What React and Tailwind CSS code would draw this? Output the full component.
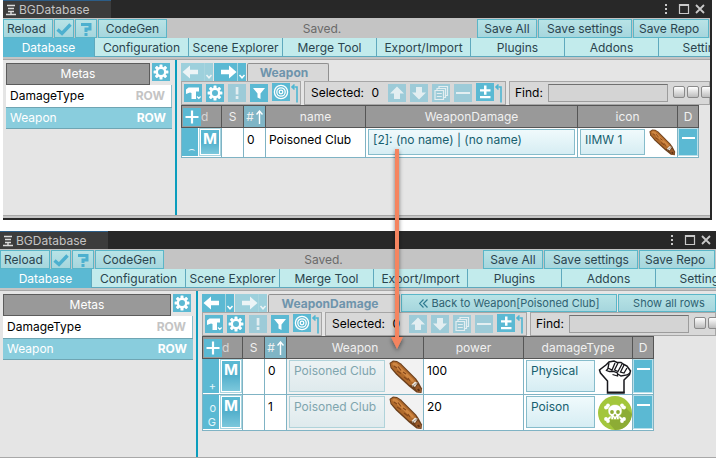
import React from 'react';

const FONT = "font-['Inter','Liberation_Sans',sans-serif]";
const ICON_BOX = 'flex h-[18px] w-[18px] shrink-0 items-center justify-center bg-[#5bb9d3] text-white';
const ICON_BOX_OFF = 'flex h-[18px] w-[18px] shrink-0 items-center justify-center bg-[#9dcbd8] text-[#e3eef1]';
const SOFT_BTN = 'flex h-[19px] shrink-0 items-center whitespace-nowrap border border-[#5ab6c8] bg-gradient-to-b from-[#b8e3e6] to-[#a6d6dd] pt-px text-[#2a444e]';

function Gear() {
  return (
    <svg viewBox="0 0 18 18" className="h-[18px] w-[18px]">
      <circle cx="9" cy="9" r="4.2" fill="none" stroke="currentColor" strokeWidth="2.4" />
      {[0, 45, 90, 135, 180, 225, 270, 315].map((a) => (
        <rect key={a} x="7.5" y="1.6" width="3" height="2.8" rx="0.5" fill="currentColor" transform={`rotate(${a} 9 9)`} />
      ))}
    </svg>
  );
}

const ICONS = {
  hammer: (
    <>
      <path d="M2 5.500 4.500 3.500H15v4h-3V15H7.500V9L6 8.500 2 10z" fill="currentColor" />
      <path d="m13 12.500 1.800 1.800 1.800-1.800" fill="none" stroke="currentColor" strokeWidth="1.200" />
    </>
  ),
  bang: <path d="M7.700 3h2.700v7.500H7.700zM7.700 12h2.700v3H7.700z" fill="currentColor" />,
  filter: <path d="M3 4h12l-4.500 5.500V15l-3-1.500v-4z" fill="currentColor" />,
  target: (
    <g fill="none" stroke="currentColor" strokeWidth="1.3">
      <circle cx="9" cy="9" r="6.600" />
      <circle cx="9" cy="9" r="4.200" />
      <circle cx="9" cy="9" r="1.800" />
    </g>
  ),
  up: <path d="M9 2.500 16 9.500h-4V15H6V9.500H2z" fill="currentColor" />,
  down: <path d="M9 15.500 2 8.500h4V3h6v5.500h4z" fill="currentColor" />,
  copy: (
    <g fill="none" stroke="currentColor" strokeWidth="1.200">
      <path d="M3 6.500h8.500v9H3zM5 6.500v-2h8.500v9h-2M7 4.500v-2h8.500v9h-2M4.800 9.500h5M4.800 12.500h5" />
    </g>
  ),
  minus: <path d="M2 8h14v2H2z" fill="currentColor" />,
  plusMinus: <path d="M8 2.500h2.500v3.700h4v2.300h-4v3.300H8V8.500H4V6.200h4zM4 13h10.500v2.300H4z" fill="currentColor" />,
};

function ToolButton({ name, label, off }) {
  return (
    <button type="button" aria-label={label} disabled={off} className={off ? ICON_BOX_OFF : ICON_BOX}>
      {name === 'gear' ? <Gear /> : <svg viewBox="0 0 18 18" className="h-[18px] w-[18px]">{ICONS[name]}</svg>}
    </button>
  );
}

function Corner() {
  return (
    <svg viewBox="0 0 9 20" className="h-5 w-[9px] shrink-0 self-start">
      <path d="M2 4h5v15.500M4.500 1.500 2 4l2.500 2.500" fill="none" stroke="#4fb6d2" strokeWidth="1.600" />
    </svg>
  );
}

function NavArrow({ dir, off }) {
  return (
    <button
      type="button"
      aria-label={dir === 'left' ? 'Back' : 'Forward'}
      disabled={off}
      className={`flex h-[18px] w-8 shrink-0 items-center ${off ? 'bg-[#9dd0dc] text-[#ecf4f6]' : 'bg-[#5bb9d3] text-white'}`}
    >
      <svg viewBox="0 0 32 18" className="h-[18px] w-8">
        <g fill="currentColor" transform={dir === 'left' ? undefined : 'translate(24 0) scale(-1 1)'}>
          <path d="M1.500 9 9 2.500v4.200h8v4.600H9v4.200z" />
        </g>
        <path d="M23.500 0v18" stroke="#a9d5df" strokeWidth="1" />
        <path d="m25.500 12 2.500 2.800 2.500-2.800" fill="none" stroke="currentColor" strokeWidth="1.500" />
      </svg>
    </button>
  );
}

function Club({ className }) {
  return (
    <svg viewBox="0 0 34 34" className={className}>
      <path d="M.5 3 4 .5 8 1l4 2.500L27 18.500l2.500 3.500L33 28.500 32.500 33l-5-.5L20 26.500 7 14.500 1.500 8z" fill="#6b3f1c" />
      <path d="M1.500 3.500 4.500 1.500 8 2l3.500 2.500L26 19l2 3.500-4 3-3.500-.5L8 13.500 2.500 7.500z" fill="#b06a2c" />
      <path d="M3 4 5 2.500 8 3.500 24 19l1.500 2.500L23 22 9 9.500z" fill="#cf8743" />
      <path d="m5 6 3 2M9 6.500l3 4M8 11l4 2.500M14 12l3 2M15 17l4 3M19 18l2 3" stroke="#85481c" strokeWidth="1.200" />
      <path d="m22.500 25 3.500-3.500 2.500 1.500-2.500 4z" fill="#ece4da" />
      <path d="m23 26.500 5.500-4" stroke="#9a938c" strokeWidth="1" />
      <path d="m26 28 3-3.500 3 4.500v3l-3 .5z" fill="#9a5a2a" />
      <path d="m28 29.500 2-1 1 2-1.500 1z" fill="#5b3013" />
    </svg>
  );
}

function Fist() {
  return (
    <svg viewBox="0 0 34 34" className="h-[34px] w-[34px] shrink-0">
      <path
        d="M9.500 33V21L2.500 13 1.500 10l7-5.500L11 2l5-1 3 1.500h4l3 2 3 1.500 3.500 5-1 3.500L26 20v13z"
        fill="#fff"
        stroke="#17171c"
        strokeWidth="1.500"
      />
      <path
        d="m11 3-1 5 4 2 3-7M20 3l-3.500 7 3.500 1.500L24 4M26 5l-3.500 7 3.500 1 3-5M10 8.500l-1.500 2 3 1h4l4 1.500v3l-5-1.500M19 13.500l4 2.500 6-1 3-2"
        fill="none"
        stroke="#17171c"
        strokeWidth="1.300"
      />
      <path d="M9 31.500h17.500V33H9z" fill="#17171c" />
    </svg>
  );
}

function Skull() {
  return (
    <svg viewBox="0 0 34 34" className="h-[34px] w-[34px] shrink-0">
      <circle cx="17" cy="17" r="17" fill="#a3c63c" />
      <path d="m9 25 8 9c7 0 13-3 16-11l1-5-9-9-5 4z" fill="#8dac35" />
      <path d="m9 11 16 13M25 11 9 24" stroke="#fff" strokeWidth="2.200" />
      <g fill="#fff">
        <circle cx="8" cy="11.500" r="1.900" />
        <circle cx="10" cy="9.500" r="1.900" />
        <circle cx="26" cy="11.500" r="1.900" />
        <circle cx="24" cy="9.500" r="1.900" />
        <circle cx="8" cy="23" r="1.900" />
        <circle cx="10" cy="25" r="1.900" />
        <circle cx="26" cy="23" r="1.900" />
        <circle cx="24" cy="25" r="1.900" />
      </g>
      <path d="M17 8.500c-4.500 0-7 3-7 6.500 0 3 1.500 4 3 5v3.500h8V20c1.500-1 3-2 3-5 0-3.500-2.500-6.500-7-6.500z" fill="#fff" stroke="#a3c63c" strokeWidth="0.600" />
      <circle cx="14" cy="16" r="1.900" fill="#8dac35" />
      <circle cx="20" cy="16" r="1.900" fill="#8dac35" />
      <path d="m17 18-1 2h2zM15.500 21.500v2M18.500 21.500v2" fill="#8dac35" stroke="#8dac35" strokeWidth="0.700" />
    </svg>
  );
}

function TitleBar() {
  return (
    <header className="flex h-[18px] shrink-0 justify-between bg-[#282828] text-[#c4c4c4]">
      <div className="flex w-[108px] items-center gap-[3px] border-t border-[#2c5d87] bg-[#3c3c3c] pl-[2px] pt-px">
        <svg viewBox="0 0 11 12" className="h-3 w-[11px] shrink-0">
          <path d="M2 1.500h8M3 4.500h6M3 7.500h6M1 10.500h10M6 7v4" stroke="#dcdcdc" strokeWidth="1.400" />
        </svg>
        <span>BGDatabase</span>
      </div>
      <div className="flex items-center pr-[5px]">
        <svg viewBox="0 0 42 12" className="h-3 w-[42px]">
          <path d="M2 1h2v2H2zM2 5h2v2H2zM2 9h2v2H2z" fill="#c9c9c9" />
          <path d="M16.500 1.500h9v9h-9zM16 2.500h10" fill="none" stroke="#c9c9c9" strokeWidth="1.200" />
          <path d="m33 2 8 8M41 2l-8 8" stroke="#c9c9c9" strokeWidth="1.800" />
        </svg>
      </div>
    </header>
  );
}

const TABS = ['Configuration', 'Scene Explorer', 'Merge Tool', 'Export/Import', 'Plugins', 'Addons', 'Settings'];

function MainBars() {
  return (
    <div className="shrink-0 border-b border-[#a8a8a8] bg-[#c4c4c4] pb-[2px] pt-px">
      <div className="flex justify-between">
        <div className="flex gap-px">
          <button type="button" className={`${SOFT_BTN} w-[50px] pl-[3px]`}>Reload</button>
          <button type="button" aria-label="Check" className={`${SOFT_BTN} w-5 justify-center`}>
            <svg viewBox="0 0 16 14" className="h-[14px] w-4 shrink-0">
              <path d="m1.500 7.500 4.500 4 8.500-9" fill="none" stroke="#4db0cf" strokeWidth="3.400" />
            </svg>
          </button>
          <button type="button" aria-label="Help" className={`${SOFT_BTN} w-[22px] justify-center`}>
            <svg viewBox="0 0 14 16" className="h-4 w-[14px]">
              <path d="M2 3.500h9v4.500H7v3M5.500 13.500h3" fill="none" stroke="#4db0cf" strokeWidth="3" />
            </svg>
          </button>
          <button type="button" className={`${SOFT_BTN} w-[69px] justify-center`}>CodeGen</button>
        </div>
        <output className="flex items-center text-[#6a6a6a]">Saved.</output>
        <div className="flex gap-px pr-px">
          <button type="button" className={`${SOFT_BTN} w-[60px] justify-center`}>Save All</button>
          <button type="button" className={`${SOFT_BTN} w-[94px] justify-center`}>Save settings</button>
          <button type="button" className={`${SOFT_BTN} w-[76px] pl-[5px]`}>Save Repo</button>
        </div>
      </div>
      <nav className="flex overflow-hidden">
        <button type="button" className="h-[19px] w-[91px] shrink-0 bg-[#5bb9d3] pt-px text-white">Database</button>
        {TABS.map((t) => (
          <button key={t} type="button" className="h-[19px] w-[94px] shrink-0 whitespace-nowrap border-b border-l border-[#5fa9bd] bg-[#c2ebec] pt-px text-[#2a444e]">
            {t}
          </button>
        ))}
      </nav>
    </div>
  );
}

function Metas({ width }) {
  return (
    <aside className={`shrink-0 px-[3px] pt-[3px] ${width}`}>
      <div className="flex gap-[2px] pr-[2px]">
        <h2 className="flex h-[22px] flex-1 items-center justify-center border border-[#5c5c5c] bg-[#999] font-normal text-white">Metas</h2>
        <button type="button" aria-label="Metas settings" className={ICON_BOX}><Gear /></button>
      </div>
      <button type="button" className="flex h-[22px] w-full items-center justify-between border-r border-[#8fc0cc] bg-white pl-1 pr-[6px] text-black">
        <span>DamageType</span>
        <span className="font-bold text-[#c4c4c4]">ROW</span>
      </button>
      <button type="button" className="flex h-[22px] w-full items-center justify-between border-y border-[#6fa5b3] bg-[#89cddd] pl-1 pr-[6px] text-white">
        <span>Weapon</span>
        <span className="font-bold">ROW</span>
      </button>
    </aside>
  );
}

const BAR = 'flex h-6 shrink-0 items-center border border-[#a6a6a6] bg-[#d8d8d8]';

function GridToolbar({ id }) {
  return (
    <div className="flex gap-[3px] overflow-hidden">
      <div className={`${BAR} w-[120px] gap-1 pl-[2px]`}>
        <ToolButton name="hammer" label="Tools" />
        <ToolButton name="gear" label="Settings" />
        <ToolButton name="bang" label="Errors" off />
        <ToolButton name="filter" label="Filter" />
        <div className="flex"><ToolButton name="target" label="Target" /><Corner /></div>
      </div>
      <div className={`${BAR} w-[202px] gap-1 pl-[6px]`}>
        <span className="flex w-[73px] justify-between pr-[5px] text-black"><span>Selected:</span><span>0</span></span>
        <ToolButton name="up" label="Move up" off />
        <ToolButton name="down" label="Move down" off />
        <ToolButton name="copy" label="Copy" off />
        <ToolButton name="minus" label="Remove" off />
        <div className="flex"><ToolButton name="plusMinus" label="Invert selection" /><Corner /></div>
      </div>
      <div className={`${BAR} min-w-0 flex-1 shrink pl-[5px] text-black`}>
        <label htmlFor={id} className="w-[33px] shrink-0">Find:</label>
        <input id={id} type="text" className="h-[18px] w-[120px] shrink-0 border border-[#9c9c9c] border-t-[#707070] bg-[#d4d4d4]" />
        <div className="ml-[5px] flex gap-[2px] pb-[2px]">
          {['Aa', 'W', 'R', 'C'].map((l) => (
            <button key={l} type="button" aria-label={`Search option ${l}`} className="h-3 w-3 shrink-0 rounded-[2px] border border-[#8a8a8a] bg-gradient-to-b from-white to-[#bdbdbd]" />
          ))}
        </div>
      </div>
    </div>
  );
}

const TH_BASE = 'h-[22px] border border-[#555] p-0 font-normal text-[#f0f0f0]';
const TH = `${TH_BASE} bg-[#999]`;
const TD_BASE = 'border border-[#7fb3c4] p-0 align-top';
const TD = `${TD_BASE} bg-white`;

function HeadStart() {
  return (
    <>
      <th className={TH}>
        <div className="flex items-center pl-px">
          <button type="button" aria-label="Add row" className={ICON_BOX}>
            <svg viewBox="0 0 18 18" className="h-[18px] w-[18px]"><path d="M9 2.500v13M2.500 9h13" stroke="currentColor" strokeWidth="2.200" /></svg>
          </button>
          <span className="text-[#d6d6d6]">d</span>
        </div>
      </th>
      <th className={TH}>S</th>
      <th className={`${TH_BASE} bg-[#7fb5c6]`}>
        <span className="flex items-center justify-center gap-[2px]">
          #
          <svg viewBox="0 0 7 14" className="h-[14px] w-[7px]"><path d="M3.500 14V2M.5 4.500l3-3.500 3 3.500" fill="none" stroke="#fff" strokeWidth="1.400" /></svg>
        </span>
      </th>
    </>
  );
}

function RowStart({ n, mark, tall }) {
  const h = tall ? 'h-[34px]' : 'h-7';
  return (
    <>
      <td className={TD}>
        <div className={`flex gap-px ${h}`}>
          <span className="flex w-4 shrink-0 items-end justify-end whitespace-pre-line bg-[#5bb9d3] pr-[3px] text-right text-[11px] leading-[14px] text-[#e4f5fa]">{mark}</span>
          <button type="button" className="flex-1 border-2 border-white bg-gradient-to-b from-[#5bb9d3] via-[#53b0cc] to-[#7cc8dc] outline outline-1 -outline-offset-1 outline-[#a8d5e0]">
            <span className="flex h-full items-start justify-center text-[15px] font-bold leading-[18px] text-white">M</span>
          </button>
        </div>
      </td>
      <td className={TD} />
      <td className={`${TD} pl-[3px] pt-[3px] text-black`}>{n}</td>
    </>
  );
}

function DeleteCell({ tall }) {
  return (
    <td className={TD}>
      <button type="button" aria-label="Delete row" className={`flex w-full justify-center border border-[#b9dfe9] bg-[#5bb9d3] pt-2 ${tall ? 'h-[34px]' : 'h-7'}`}>
        <span className="h-[2px] w-[13px] bg-white" />
      </button>
    </td>
  );
}

function Ref({ children, dim, tall }) {
  return (
    <button
      type="button"
      className={`flex min-w-0 flex-1 items-start whitespace-nowrap border px-1 pt-px ${tall ? 'h-8' : 'h-[26px]'} ${
        dim ? 'border-[#b0d3da] bg-gradient-to-b from-[#eef3f4] to-[#dfeaed] text-[#7fa5ae]' : 'border-[#86bccb] bg-gradient-to-b from-[#f0fafc] to-[#d6edf3] text-[#17606f]'
      }`}
    >
      {children}
    </button>
  );
}

const TABLE = 'table-fixed border-collapse text-[12px] leading-[18px]';

function WeaponTable() {
  return (
    <table className={`${TABLE} w-[517px]`}>
      <colgroup>
        <col className="w-10" /><col className="w-[22px]" /><col className="w-[22px]" /><col className="w-[100px]" />
        <col className="w-[212px]" /><col className="w-[100px]" /><col className="w-[21px]" />
      </colgroup>
      <thead>
        <tr>
          <HeadStart />
          <th className={TH}>name</th>
          <th className={TH}>WeaponDamage</th>
          <th className={TH}>icon</th>
          <th className={TH}>D</th>
        </tr>
      </thead>
      <tbody>
        <tr className="h-[30px]">
          <RowStart n="0" mark="⌢" />
          <td className={`${TD} pl-[3px] pt-[3px] text-black`}>Poisoned Club</td>
          <td className={TD}><div className="flex px-[2px] pt-px"><Ref>[2]: (no name) | (no name)</Ref></div></td>
          <td className={TD}>
            <div className="flex items-start gap-[3px] pl-[2px] pt-px">
              <Ref>IIMW 1</Ref>
              <Club className="h-7 w-[29px] shrink-0 pb-px" />
            </div>
          </td>
          <DeleteCell />
        </tr>
      </tbody>
    </table>
  );
}

function DamageRow({ n, mark, power, type, art }) {
  return (
    <tr className="h-9">
      <RowStart n={n} mark={mark} tall />
      <td className={`${TD_BASE} bg-[#f2f2f2]`}>
        <div className="flex items-start gap-1 pl-[2px] pt-px"><Ref dim tall>Poisoned Club</Ref><Club className="h-[34px] w-[34px] shrink-0" /></div>
      </td>
      <td className={`${TD} pl-[3px] pt-[3px] text-black`}>{power}</td>
      <td className={TD}>
        <div className="flex items-start gap-[3px] pl-[2px] pt-px"><Ref tall>{type}</Ref>{art}</div>
      </td>
      <DeleteCell tall />
    </tr>
  );
}

function DamageTable() {
  return (
    <table className={`${TABLE} w-[451px]`}>
      <colgroup>
        <col className="w-10" /><col className="w-[22px]" /><col className="w-[22px]" /><col className="w-[137px]" />
        <col className="w-[100px]" /><col className="w-[109px]" /><col className="w-[21px]" />
      </colgroup>
      <thead>
        <tr>
          <HeadStart />
          <th className={TH}>Weapon</th>
          <th className={TH}>power</th>
          <th className={TH}>damageType</th>
          <th className={TH}>D</th>
        </tr>
      </thead>
      <tbody>
        <DamageRow n="0" mark="+" power="100" type="Physical" art={<Fist />} />
        <DamageRow n="1" mark={'o\nG'} power="20" type="Poison" art={<Skull />} />
      </tbody>
    </table>
  );
}

const PAGE_TAB = 'flex h-[18px] shrink-0 items-center justify-center rounded-t-[2px] border border-b-0 border-[#909090] bg-[#d8d8d8] pr-2 pt-px font-bold text-[#6e94ac]';
const LINK_BTN = 'flex h-[18px] items-center justify-center whitespace-nowrap border border-[#5ab6c8] bg-gradient-to-b from-[#b8e3e6] to-[#a6d6dd] text-[11px] text-[#2f6272]';

function EditorWindow({ className, metasWidth, footer, children }) {
  return (
    <section className={`flex flex-col overflow-hidden bg-[#e5e5e5] ${className}`}>
      <TitleBar />
      <MainBars />
      <div className="flex min-h-0 flex-1 border-b border-[#a8a8a8]">
        <Metas width={metasWidth} />
        <div className="w-[6px] shrink-0 border-l-2 border-[#0a9dbd]" />
        <div className="min-w-0 flex-1 overflow-hidden pt-[3px]">{children}</div>
      </div>
      {footer && <div className="h-[2px] shrink-0 bg-[#c4c4c4]" />}
    </section>
  );
}

export default function App() {
  return (
    <main className={`relative bg-white text-[12px] leading-4 ${FONT}`}>
      <EditorWindow className="ml-[3px] mr-1 h-[220px] border-b-2 border-r-2 border-[#282828]" metasWidth="w-[172px]" footer>
        <div className="flex gap-px">
          <NavArrow dir="left" off />
          <NavArrow dir="right" />
          <button type="button" className={`${PAGE_TAB} w-[82px]`}>Weapon</button>
        </div>
        <GridToolbar id="find-weapon" />
        <WeaponTable />
      </EditorWindow>
      <div className="h-[11px]" />
      <EditorWindow className="h-[227px]" metasWidth="w-[196px]">
        <div className="flex gap-px">
          <NavArrow dir="left" />
          <NavArrow dir="right" off />
          <button type="button" className={`${PAGE_TAB} w-[132px]`}>WeaponDamage</button>
          <button type="button" className={`${LINK_BTN} w-[216px] shrink-0 gap-1`}>
            <svg viewBox="0 0 9 9" className="h-[9px] w-[9px]"><path d="M4.500.500.500 4.500l4 4M8.500.500l-4 4 4 4" fill="none" stroke="#2f7c92" strokeWidth="1.200" /></svg>
            Back to Weapon[Poisoned Club]
          </button>
          <button type="button" className={`${LINK_BTN} min-w-0 flex-1 pl-1`}>
            Show all rows
          </button>
        </div>
        <GridToolbar id="find-damage" />
        <DamageTable />
      </EditorWindow>
      <svg viewBox="0 0 24 212" className="pointer-events-none absolute left-[385px] top-[147px] h-[212px] w-6">
        <defs>
          <filter id="arrow-shadow" x="-50%" y="-5%" width="200%" height="110%">
            <feDropShadow dx="0" dy="2" stdDeviation="2" floodOpacity="0.5" />
          </filter>
        </defs>
        <path d="M10 2h4v188h4l-6 12-6-12h4z" fill="#f5845f" filter="url(#arrow-shadow)" />
      </svg>
    </main>
  );
}
